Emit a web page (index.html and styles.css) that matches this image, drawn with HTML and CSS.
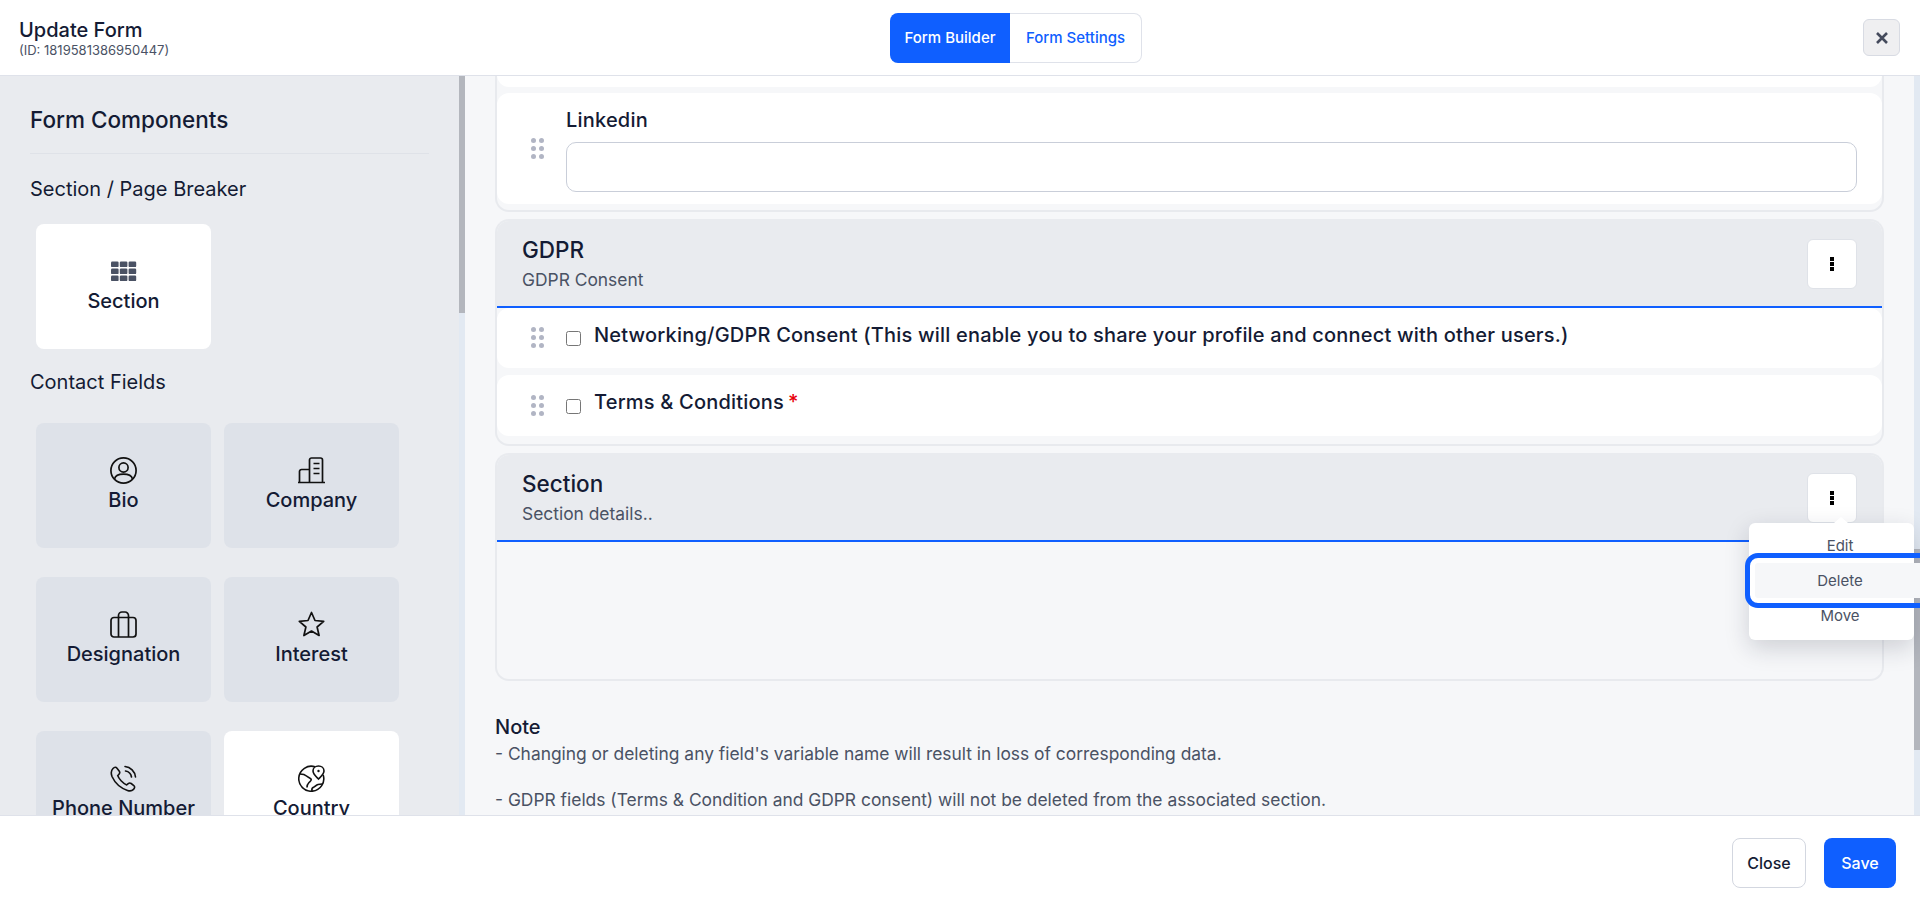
FILE: index.html
```html
<!DOCTYPE html>
<html lang="en">
<head>
    <meta charset="UTF-8">
    <meta name="viewport" content="width=device-width, initial-scale=1.0">
    <title>Update Form</title>
    <link rel="stylesheet" href="styles.css">
</head>
<body>
    <div id="wrapper">
        <header class="topBar">
            <div class="titleBlock">
                <div class="formTitle">Update Form</div>
                <div class="formId">(ID: 1819581386950447)</div>
            </div>
            <div class="tabs">
                <button class="tab tabActive">Form Builder</button>
                <button class="tab">Form Settings</button>
            </div>
            <button class="closeX" aria-label="Close">
                <svg width="14" height="14" viewBox="0 0 14 14"><path d="M2 2l10 10M12 2L2 12" stroke="#444a5c" stroke-width="2.6" fill="none"/></svg>
            </button>
        </header>

        <div class="content">
            <aside class="sidebar">
                <div class="sidebarInner">
                    <h2 class="sideTitle">Form Components</h2>
                    <h3 class="groupTitle firstGroup">Section / Page Breaker</h3>
                    <div class="tileGrid">
                        <div class="tile tileWhite">
                            <svg class="tileIcon" width="27" height="27" viewBox="0 0 27 27" fill="#4a5264">
                                <rect x="1" y="3.5" width="7.6" height="5.6" rx="1.2"/><rect x="9.8" y="3.5" width="7.6" height="5.6" rx="1.2"/><rect x="18.6" y="3.5" width="7.6" height="5.6" rx="1.2"/>
                                <rect x="1" y="10.5" width="7.6" height="5.6" rx="1.2"/><rect x="9.8" y="10.5" width="7.6" height="5.6" rx="1.2"/><rect x="18.6" y="10.5" width="7.6" height="5.6" rx="1.2"/>
                                <rect x="1" y="17.5" width="7.6" height="5.6" rx="1.2"/><rect x="9.8" y="17.5" width="7.6" height="5.6" rx="1.2"/><rect x="18.6" y="17.5" width="7.6" height="5.6" rx="1.2"/>
                            </svg>
                            <span>Section</span>
                        </div>
                    </div>
                    <h3 class="groupTitle">Contact Fields</h3>
                    <div class="tileGrid contactGrid">
                        <div class="tile">
                            <svg class="tileIcon" width="27" height="27" viewBox="0 0 27 27" fill="none" stroke="#111" stroke-width="1.7">
                                <circle cx="13.5" cy="13.5" r="12.6"/><circle cx="13.5" cy="10.5" r="4.6"/><path d="M4.5 22c1-4 4.500-4.800 9-4.800s8 .8 9 4.800"/>
                            </svg>
                            <span>Bio</span>
                        </div>
                        <div class="tile">
                            <svg class="tileIcon" width="27" height="27" viewBox="0 0 27 27" fill="none" stroke="#111" stroke-width="1.7">
                                <path d="M0 25.500h27M1.500 25V14.500a2 2 0 0 1 2-2h8.500M11.500 25V3a2 2 0 0 1 2-2h9a2 2 0 0 1 2 2v22"/><path d="M15.500 6.500h6M15.500 11.500h6M15.500 16.500h6" stroke-width="1.500"/>
                            </svg>
                            <span>Company</span>
                        </div>
                        <div class="tile">
                            <svg class="tileIcon" width="27" height="27" viewBox="0 0 27 27" fill="none" stroke="#111" stroke-width="1.7">
                                <rect x="1" y="6.500" width="25" height="19.500" rx="3"/><path d="M8.500 26V4.500a3.500 3.500 0 0 1 3.500-3.500h3a3.500 3.500 0 0 1 3.500 3.500V26"/>
                            </svg>
                            <span>Designation</span>
                        </div>
                        <div class="tile">
                            <svg class="tileIcon" width="27" height="27" viewBox="0 0 27 27" fill="none" stroke="#111" stroke-width="1.7" stroke-linejoin="round">
                                <path d="M13.500 1.500l3.500 8 8.700.8-6.600 5.700 2 8.500-7.600-4.500-7.600 4.500 2-8.500-6.600-5.700 8.700-.8z"/>
                            </svg>
                            <span>Interest</span>
                        </div>
                        <div class="tile">
                            <svg class="tileIcon" width="27" height="27" viewBox="0 0 27 27" fill="none" stroke="#111" stroke-width="1.6" stroke-linecap="round">
                                <path d="M3 3.500c1.500-1.500 3-1.600 4-.3l2.300 3c.7 1 .6 2-.3 3l-1.300 1.400c1 3 5 7.800 9 9.300l1.500-1.300c1-.8 2-.8 3-.1l2.600 2c1.200 1 1 2.600-.3 3.900-1.400 1.400-3.500 2-6 1C9 22.500 4.500 17 2 11.500.9 8.500 1.500 5 3 3.500z"/><path d="M15 1.500c5.500.5 10 5 10.500 10.500M15.500 6c3 .5 5.500 3 6 6"/>
                            </svg>
                            <span>Phone Number</span>
                        </div>
                        <div class="tile tileWhite">
                            <svg class="tileIcon" width="27" height="27" viewBox="0 0 27 27" fill="none" stroke="#111" stroke-width="1.6">
                                <path d="M17 1.800A12.500 12.500 0 1 0 25.200 10"/><path d="M2 9c3 0 5 .5 6.500 2 1.500 1.500 3.500 1.500 4.500 3s-1 2.500-2 3.500-2 2-2 5M14 26c-.5-2 .5-3.500 2-4s2-2 4-2.500 3-.5 4-.5"/><path d="M20.500 1c3 0 5.500 2 5.500 5 0 3-3 5.500-5.500 8-2.500-2.500-5.500-5-5.500-8 0-3 2.500-5 5.500-5z" fill="#fff"/><circle cx="20.500" cy="6" r="1.200" fill="#111" stroke="none"/>
                            </svg>
                            <span>Country</span>
                        </div>
                    </div>
                </div>
                <div class="scrollTrack"><div class="scrollThumb sideThumb"></div></div>
            </aside>

            <main class="main">
                <div class="mainScroll">
                    <section class="section cutSection">
                        <div class="fieldCard cutCard"></div>
                        <div class="fieldCard">
                            <span class="dragDots"><i></i><i></i><i></i><i></i><i></i><i></i></span>
                            <div class="fieldBody">
                                <label class="fieldLabel" for="linkedin">Linkedin</label>
                                <input type="text" id="linkedin" class="textField">
                            </div>
                        </div>
                    </section>

                    <section class="section">
                        <div class="sectionHead">
                            <div>
                                <div class="sectionName">GDPR</div>
                                <div class="sectionDesc">GDPR Consent</div>
                            </div>
                            <button class="moreBtn" aria-label="More"><span class="moreDots"></span></button>
                        </div>
                        <div class="fieldCard checkCard">
                            <span class="dragDots"><i></i><i></i><i></i><i></i><i></i><i></i></span>
                            <input type="checkbox" class="checkField">
                            <span class="fieldLabel">Networking/GDPR Consent (This will enable you to share your profile and connect with other users.)</span>
                        </div>
                        <div class="fieldCard checkCard">
                            <span class="dragDots"><i></i><i></i><i></i><i></i><i></i><i></i></span>
                            <input type="checkbox" class="checkField">
                            <span class="fieldLabel">Terms &amp; Conditions<span class="required">*</span></span>
                        </div>
                    </section>

                    <section class="section">
                        <div class="sectionHead">
                            <div>
                                <div class="sectionName">Section</div>
                                <div class="sectionDesc">Section details..</div>
                            </div>
                            <button class="moreBtn" aria-label="More"><span class="moreDots"></span></button>
                        </div>
                        <div class="emptyDrop"></div>
                    </section>

                    <div class="note">
                        <div class="noteTitle">Note</div>
                        <p>- Changing or deleting any field's variable name will result in loss of corresponding data.</p>
                        <p>- GDPR fields (Terms &amp; Condition and GDPR consent) will not be deleted from the associated section.</p>
                    </div>
                </div>
                <div class="scrollTrack"><div class="scrollThumb mainThumb"></div></div>

                <div class="menu">
                    <div class="menuItem">Edit</div>
                    <div class="menuItem menuFocus">Delete</div>
                    <div class="menuItem">Move</div>
                </div>
            </main>
        </div>

        <footer class="bottomBar">
            <button class="footBtn">Close</button>
            <button class="footBtn saveBtn">Save</button>
        </footer>
    </div>
</body>
</html>
```

FILE: styles.css
```css
* {
    box-sizing: border-box;
}
html, body {
    height: 100%;
    margin: 0;
    overflow: hidden;
}
body {
    font-family: Inter, "Noto Sans", sans-serif;
    color: #141b34;
    background-color: #ffffff;
}
button {
    font-family: inherit;
    cursor: pointer;
}
#wrapper {
    display: flex;
    flex-direction: column;
    height: 912px;
}

/* top bar */
.topBar {
    height: 76px;
    flex: none;
    display: grid;
    grid-template-columns: 871px auto 1fr;
    align-items: center;
    padding: 0 20px 0 19px;
    border-bottom: 1px solid #dfe2ea;
}
.titleBlock {
    padding-bottom: 2px;
}
.formTitle {
    font-size: 20px;
    line-height: 26px;
    font-weight: 500;
}
.formId {
    font-size: 13px;
    line-height: 14px;
    color: #4a5264;
}
.tabs {
    display: flex;
    height: 50px;
}
.tab {
    font-size: 15px;
    font-weight: 500;
    color: #0f5fff;
    background-color: #ffffff;
    border: 1px solid #dfe2ea;
    border-left: none;
    border-radius: 0 8px 8px 0;
    width: 132px;
    padding: 0;
}
.tabActive {
    width: 120px;
    color: #ffffff;
    background-color: #0f5fff;
    border: none;
    border-radius: 8px 0 0 8px;
}
.closeX {
    justify-self: end;
    width: 37px;
    height: 37px;
    padding: 0;
    display: flex;
    align-items: center;
    justify-content: center;
    background-color: #efeff1;
    border: 1px solid #d8dbe3;
    border-radius: 6px;
}

/* layout */
.content {
    flex: 1;
    display: flex;
    min-height: 0;
}
.sidebar {
    width: 465px;
    flex: none;
    display: flex;
    background-color: #e9ebef;
}
.sidebarInner {
    flex: 1;
    overflow: hidden;
    padding: 28px 30px 0 30px;
}
.scrollTrack {
    width: 6px;
    flex: none;
    background-color: #e2e9f2;
}
.scrollThumb {
    background-color: #b3b6bd;
}
.sideThumb {
    height: 237px;
}
.mainThumb {
    margin-top: 473px;
    height: 201px;
}
.sideTitle {
    margin: 0;
    font-size: 22.5px;
    line-height: 32px;
    font-weight: 500;
    padding-bottom: 17px;
    border-bottom: 1px solid #dfe2e8;
}
.groupTitle {
    margin: 0;
    font-size: 20px;
    line-height: 26px;
    font-weight: 400;
    padding-top: 20px;
}
.firstGroup {
    padding-top: 22px;
}
.tileGrid {
    display: grid;
    grid-template-columns: 175px 175px;
    gap: 29px 13px;
    padding: 22px 6px 0 6px;
}
.contactGrid {
    padding-top: 28px;
}
.tile {
    height: 125px;
    background-color: #dee2e9;
    border-radius: 8px;
    display: flex;
    flex-direction: column;
    align-items: center;
    padding-top: 34px;
    font-size: 20px;
    line-height: 26px;
    font-weight: 500;
}
.tileWhite {
    background-color: #ffffff;
}
.tileIcon {
    margin-bottom: 3px;
}

/* main column */
.main {
    flex: 1;
    min-width: 0;
    display: flex;
    position: relative;
    background-color: #f6f7f9;
}
.mainScroll {
    flex: 1;
    min-width: 0;
    overflow: hidden;
    padding: 0 30px;
}
.section {
    border: 2px solid #e8eaee;
    border-top-color: #e9ebef;
    border-radius: 14px;
    background-color: #f6f7f9;
    margin-bottom: 7px;
    padding-bottom: 8px;
}
.cutSection {
    margin-top: -32px;
    border-top: none;
    padding-bottom: 6px;
}
.fieldCard {
    background-color: #ffffff;
    border-radius: 12px;
    display: flex;
    align-items: center;
    padding: 0 25px 0 34px;
}
.cutCard {
    height: 43px;
    margin-bottom: 6px;
}
.fieldCard + .fieldCard {
    margin-top: 7px;
}
.cutCard + .fieldCard {
    margin-top: 0;
    height: 111px;
}
.dragDots {
    width: 12px;
    flex: none;
    display: grid;
    grid-template-columns: 5px 5px;
    gap: 3px 3px;
    margin-right: 23px;
}
.dragDots i {
    width: 5px;
    height: 5px;
    border-radius: 50%;
    background-color: #b1b5c4;
}
.fieldBody {
    flex: 1;
    padding-top: 2px;
}
.fieldLabel {
    display: block;
    font-size: 20px;
    line-height: 26px;
    font-weight: 500;
    letter-spacing: 0.2px;
}
.textField {
    display: block;
    width: 100%;
    height: 50px;
    margin-top: 9px;
    border: 1px solid #c9ced9;
    border-radius: 10px;
    background-color: #ffffff;
}
.sectionHead {
    height: 87px;
    padding: 0 25px;
    background-color: #e9ebef;
    border-radius: 12px 12px 0 0;
    border-bottom: 2px solid #0f5fff;
    display: flex;
    align-items: center;
    justify-content: space-between;
}
.sectionName {
    font-size: 22.5px;
    line-height: 30px;
    font-weight: 500;
}
.sectionDesc {
    font-size: 17.4px;
    line-height: 24px;
    color: #4a5264;
    margin-top: 3px;
}
.moreBtn {
    width: 50px;
    height: 50px;
    padding: 0;
    display: flex;
    align-items: center;
    justify-content: center;
    background-color: #ffffff;
    border: 1px solid #dfe2e8;
    border-radius: 6px;
}
.moreDots {
    width: 4px;
    height: 14px;
    background: repeating-linear-gradient(#000000 0 4px, transparent 4px 5px);
}
.checkCard {
    height: 60px;
    padding-bottom: 7px;
}
.checkCard + .checkCard {
    height: 61px;
}
.checkCard .dragDots {
    margin-top: 6px;
}
.checkField {
    width: 15px;
    height: 15px;
    margin: 8px 13px 0 0;
    flex: none;
}
.required {
    color: #e8000b;
    margin-left: 4px;
}
.emptyDrop {
    height: 129px;
}

/* note */
.note {
    padding-top: 25px;
    font-size: 17.4px;
    line-height: 25px;
    color: #4a5264;
}
.noteTitle {
    font-size: 20px;
    font-weight: 500;
    line-height: 28px;
    color: #141b34;
}
.note p {
    margin: 0 0 21px 0;
}

/* dropdown */
.menu {
    position: absolute;
    top: 447px;
    left: 1284px;
    width: 165px;
    height: 117px;
    padding: 5px 0 0 6px;
    background-color: #ffffff;
    border-radius: 6px;
    box-shadow: 0 8px 24px rgba(20, 27, 52, 0.18);
    z-index: 5;
}
.menu::before {
    content: "";
    position: absolute;
    top: -6px;
    left: 85px;
    border: 7px solid transparent;
    border-top: none;
    border-bottom: 6px solid #ffffff;
}
.menuItem {
    width: 170px;
    height: 35px;
    font-size: 15px;
    line-height: 35px;
    text-align: center;
    color: #4a5264;
}
.menuFocus {
    background-color: #f6f7f9;
    outline: 5px solid #0f5fff;
    outline-offset: 5px;
    border-radius: 3px;
}

/* bottom bar */
.bottomBar {
    height: 97px;
    flex: none;
    border-top: 1px solid #dfe2ea;
    display: flex;
    justify-content: flex-end;
    align-items: center;
    gap: 18px;
    padding: 0 24px 2px 0;
}
.footBtn {
    height: 50px;
    width: 74px;
    font-size: 16px;
    font-weight: 500;
    color: #141b34;
    background-color: #ffffff;
    border: 1px solid #d3d7e0;
    border-radius: 8px;
}
.saveBtn {
    width: 72px;
    color: #ffffff;
    background-color: #0f5fff;
    border: none;
}
```
